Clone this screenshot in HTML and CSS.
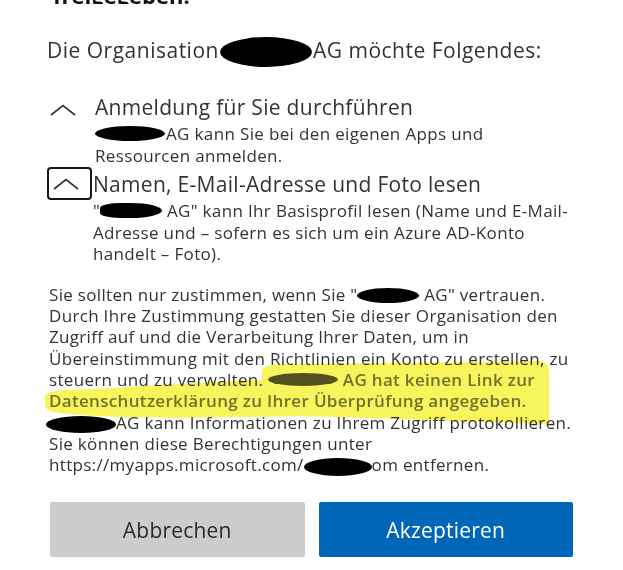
FILE: index.html
```html
<!DOCTYPE html>
<html lang="de">
<head>
<meta charset="utf-8">
<link rel="stylesheet" href="styles.css">
</head>
<body>
<div class="dialog">
  <div class="title-clip"><div class="title">freigegeben.</div></div>
  <div class="intro">Die Organisation<span class="blot blot-intro"></span>AG möchte Folgendes:</div>

  <div class="perm">
    <div class="chev-wrap"><svg class="chev" viewBox="0 0 26 12" width="26" height="12"><path d="M1 11 L13 1.5 L25 11" fill="none" stroke="#333" stroke-width="1.6"/></svg></div>
    <div class="perm-body">
      <div class="perm-title">Anmeldung für Sie durchführen</div>
      <div class="perm-desc"><span class="blot blot-a"></span>AG kann Sie bei den eigenen Apps und<br>Ressourcen anmelden.</div>
    </div>
  </div>

  <div class="perm perm-focus">
    <div class="chev-wrap focus"><svg class="chev" viewBox="0 0 26 12" width="26" height="12"><path d="M1 11 L13 1.5 L25 11" fill="none" stroke="#333" stroke-width="1.6"/></svg></div>
    <div class="perm-body">
      <div class="perm-title">Namen, E-Mail-Adresse und Foto lesen</div>
      <div class="perm-desc">"<span class="blot blot-b"></span> AG" kann Ihr Basisprofil lesen (Name und E-Mail-<br>Adresse und – sofern es sich um ein Azure AD-Konto<br>handelt – Foto).</div>
    </div>
  </div>

  <div class="consent">
    <p class="text">Sie sollten nur zustimmen, wenn Sie "<span class="blot blot-c"></span> AG" vertrauen.<br>
    Durch Ihre Zustimmung gestatten Sie dieser Organisation den<br>
    Zugriff auf und die Verarbeitung Ihrer Daten, um in<br>
    Übereinstimmung mit den Richtlinien ein Konto zu erstellen, zu<br>
    steuern und zu verwalten. <span class="blot blot-d"></span> <strong class="hl">AG hat keinen Link zur<br>
    Datenschutzerklärung zu Ihrer Überprüfung angegeben.</strong><br>
    <span class="blot blot-e"></span>AG kann Informationen zu Ihrem Zugriff protokollieren.<br>
    Sie können diese Berechtigungen unter<br>
    https://myapps.microsoft.com/<span class="blot blot-f"></span>om entfernen.</p>
  </div>

  <div class="actions">
    <button class="btn btn-secondary">Abbrechen</button>
    <button class="btn btn-primary">Akzeptieren</button>
  </div>

  <svg class="marker" width="623" height="570" viewBox="0 0 623 570">
    <path d="M262 372 C262 366 270 364 290 364 C380 363 470 362 540 361 C546 361 549 366 549 372 L549 424 C450 421 350 417 300 416 C200 418 120 419 70 414 C55 413 46 411 45 406 L45 396 C46 391 60 390 90 389 C150 386 200 382 262 380 Z" fill="#f7f45c"/>
  </svg>
</div>
</body>
</html>
```
FILE: styles.css
```css
* { box-sizing: border-box; }
html, body { margin: 0; padding: 0; background: #fff; }
body {
  font-family: "Open Sans", "Noto Sans", sans-serif;
  color: #333;
  overflow: hidden;
}
.dialog {
  position: relative;
  width: 623px;
  height: 570px;
  padding: 0 50px 0 47px;
  display: flex;
  flex-direction: column;
}
.title-clip {
  height: 4px;
  overflow: hidden;
  flex: none;
}
.title {
  font-size: 22px;
  font-weight: 700;
  line-height: 24px;
  margin-top: -17px;
  padding-left: 6px;
  color: #111;
}
.intro {
  font-size: 21px;
  line-height: 30px;
  margin-top: 31px;
  letter-spacing: 0.5px;
  white-space: nowrap;
}
.blot {
  display: inline-block;
  background: #000;
  border-radius: 50%;
  vertical-align: middle;
}
.blot-intro { width: 92px; height: 30px; margin: 0 1px 0 1px; }
.perm { display: flex; margin-top: 26px; }
.perm-focus { margin-top: 4px; }
.chev-wrap {
  width: 45px;
  height: 33px;
  display: flex;
  align-items: center;
  flex: none;
  padding-left: 1px;
  margin-right: 3px;
  border: 2px solid transparent;
  border-radius: 4px;
}
.chev-wrap.focus {
  border-color: #161616;
  padding-left: 4px;
  margin-top: -3px;
  margin-right: 1px;
}
.chev { display: block; }
.perm-title {
  font-size: 21px;
  line-height: 28px;
  letter-spacing: 0.3px;
  white-space: nowrap;
}
.perm-desc {
  font-size: 17px;
  line-height: 21.5px;
  letter-spacing: 0.35px;
  margin-top: 2px;
  white-space: nowrap;
}
.blot-a { width: 70px; height: 15px; margin-right: 1px; vertical-align: -1px; }
.blot-b { width: 62px; height: 15px; vertical-align: -1px; border-radius: 40% 60% 60% 40%; }
.consent { margin-top: 19px; }
.text {
  margin: 0;
  padding-left: 2px;
  font-size: 17px;
  line-height: 21.3px;
  letter-spacing: 0.32px;
  white-space: nowrap;
}
.hl { font-weight: 600; color: #777; }
.blot-c { width: 62px; height: 15px; vertical-align: -2px; }
.blot-d { width: 70px; height: 13px; vertical-align: 0; background: #555; }
.blot-e { width: 70px; height: 17px; vertical-align: -4px; margin-left: -3px; }
.blot-f { width: 68px; height: 18px; vertical-align: -5px; }
.actions {
  display: flex;
  gap: 14px;
  margin-top: 26px;
  padding-left: 3px;
}
.btn {
  width: 255px;
  height: 55px;
  border: none;
  border-radius: 2px;
  font-family: inherit;
  font-size: 21px;
  letter-spacing: 0.2px;
}
.btn-secondary { background: #cccccc; color: #2b2b2b; }
.btn-primary { background: #0067b8; color: #fff; }
.marker {
  position: absolute;
  left: 0;
  top: 0;
  mix-blend-mode: multiply;
  pointer-events: none;
}
```
